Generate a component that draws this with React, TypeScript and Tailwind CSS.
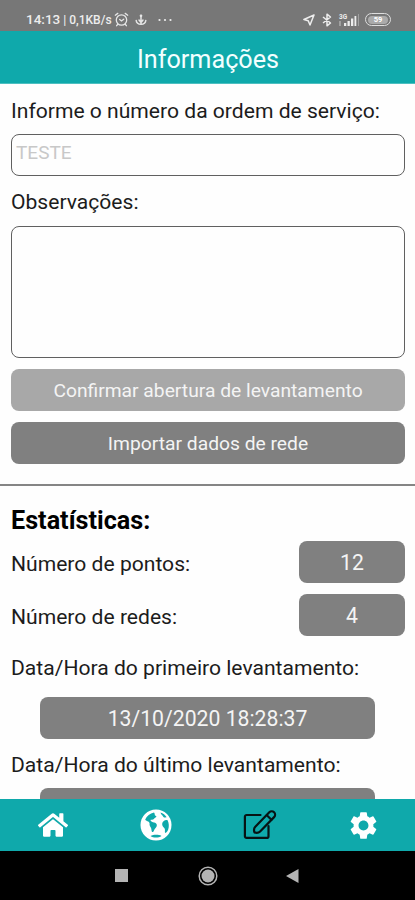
import type { ReactNode } from "react";
import { FaHome } from "react-icons/fa";
import { MdSettings } from "react-icons/md";

function Label({ children }: { children: ReactNode }) {
  return <div className="h-7 whitespace-nowrap text-[21.1px] leading-7">{children}</div>;
}

function Value({ children }: { children?: ReactNode }) {
  return (
    <div className="flex h-[42px] w-full items-center justify-center rounded-lg bg-[#808080] pt-[2px] text-[21.2px] text-[#f4f4f4]">
      {children}
    </div>
  );
}

function AlarmIcon() {
  return (
    <svg width="15" height="15" viewBox="0 0 15 15" fill="none" stroke="#e6e6e6" strokeWidth="1.3" strokeLinecap="round">
      <path d="M1.3 3.2 3.8 1.4M13.7 3.2 11.2 1.4M3.6 12.5l-1 1.2M11.4 12.5l1 1.2" />
      <circle cx="7.5" cy="8" r="5.2" />
      <path d="M5.7 7.5 7.5 9l2.2-1.8" />
    </svg>
  );
}

function AnchorIcon() {
  return (
    <svg width="12" height="12" viewBox="0 0 12 12" fill="none" stroke="#e6e6e6" strokeWidth="1.5" strokeLinecap="round">
      <path d="M6 1.5V10M4 6l2 2.5L8 6M1.2 6.5C1.500 9.300 3.500 10.300 6 10.300s4.500-1 4.800-3.800" />
      <circle cx="6" cy="1.8" r=".6" />
    </svg>
  );
}

function GlobeIcon() {
  return (
    <svg width="32" height="32" viewBox="0 0 32 32">
      <circle cx="16" cy="16" r="15.5" fill="#fff" />
      <g fill="#0fa9ab">
        <path d="M14 3.600C10 4.500 6.800 7 5.200 10.600c.6 1 1.400 1.300 2.300 1.700 1 .4 2 .9 2.100 2.300-.3 1.500.3 2.800 1.200 3.900.8 1.200.500 3 1.200 4.600 1.300.2 1.800-1 2.200-2.100.4-1.100 1.500-1.800 2.100-2.900.7-1.200.8-2.600-.2-3.600-1.100-1-2.900-1-4.200-1.700-1-.6-1.700-1.300-1.200-2 1-.3 2 .2 2.900-.500.8-.8 1.500-1.600 2.600-2.300.6-.8-.4-1.300-1.200-1.500-.4-1-.1-1.900-1-2.900Z" />
        <path d="M20.500 3.600c2.600.9 4.800 2.500 6.200 4.700-1.100-.3-1.700.6-2.600.2-1.100-.6-1-1.500-2-2.300-.9-.7-1.300-1.600-1.600-2.600Z" />
        <path d="M23.500 12.200c1.200-1 2.700-1.400 4.100-1 1.400 2.800 1.600 6.200.6 9.200-.6 1.600-1.700 3-2.900 3.700-.9-1.300 0-2.900-.500-4.200-.5-1.200-1.600-1.700-2.200-2.900-.7-1.500-.6-3.600.9-4.800Z" />
        <path d="M10.500 27c3-1.500 8-1.500 11-.1-3 2.200-8 2.200-11 .1Z" />
      </g>
    </svg>
  );
}

function EditIcon() {
  return (
    <svg width="34" height="32" viewBox="0 0 34 32" fill="none" stroke="#071314" strokeWidth="2.2" strokeLinejoin="round" strokeLinecap="round">
      <path d="M17.500 6H3.600A1.700 1.700 0 0 0 1.900 7.700v19.500a1.700 1.700 0 0 0 1.700 1.700h20.200a1.700 1.700 0 0 0 1.700-1.700V17" />
      <path d="M11.500 23.400c-.7-1.900-.5-4.300.8-5.600L26.300 3.300a3.400 3.400 0 0 1 4.800 0 3.400 3.400 0 0 1 0 4.800L17.100 22.400c-1.300 1.300-3.700 1.600-5.600 1Z" />
      <path d="m23.800 6.200 4.600 4.600" />
    </svg>
  );
}

export default function App() {
  return (
    <div className="flex h-[900px] w-[415px] flex-col overflow-hidden bg-[#fefefe] font-['Roboto',sans-serif] text-[#1c1c1c]">
      <div className="flex h-[31px] shrink-0 items-center bg-[#777777] pr-[24px] pl-[26px] pt-2 text-[#ededed]">
        <span className="w-[88px] whitespace-nowrap text-[13.5px] font-medium">
          14:13<span className="text-[12px]"> | 0,1KB/s</span>
        </span>
        <AlarmIcon />
        <span className="ml-[6px]"><AnchorIcon /></span>
        <svg className="ml-[11px]" width="14" height="4" viewBox="0 0 14 4" fill="currentColor">
          <circle cx="1.500" cy="2" r="1.100" /><circle cx="7" cy="2" r="1.100" /><circle cx="12.500" cy="2" r="1.100" />
        </svg>
        <svg className="ml-auto" width="12" height="12" viewBox="0 0 12 12" fill="none" stroke="currentColor" strokeWidth="1.5" strokeLinejoin="round">
          <path d="M11 1 .9 5.500l4.300 1.200L7 11Z" />
        </svg>
        <svg className="ml-[7px]" width="10" height="14" viewBox="0 0 10 14" fill="none" stroke="currentColor" strokeWidth="1.5" strokeLinejoin="round">
          <path d="m1 4 7.500 6L5 12.800V1.200L8.500 4 1 10" />
        </svg>
        <svg className="ml-[6px]" width="22" height="14" viewBox="0 0 22 14" fill="currentColor">
          <text x="1" y="5.500" fontSize="6.500" fontWeight="700" fontFamily="Roboto">3G</text>
          <path d="M6 10h2.300v3H6zM9.500 8h2.300v5H9.500zM13 5.500h2.300V13H13zM16.500 3h1.800v10h-1.800z" />
          <path d="M20 1h1v12h-1zM1 8h2v5H1z" opacity=".35" />
        </svg>
        <span className="ml-[5px] flex h-[13px] w-[26px] items-center justify-center rounded-full border-[1.5px] border-[#dedede]">
          <span className="flex h-[8px] w-[20px] items-center justify-center rounded-full bg-[#aaaaaa] text-[7.5px] leading-none font-bold text-white">59</span>
        </span>
      </div>
      <div className="flex h-[53px] shrink-0 items-center justify-center border-b border-[#4dbfc0] bg-[#0fa9ab] pt-[5px] pl-[1px] text-[25.2px] text-[#f2ffff]">
        Informações
      </div>
      <div className="flex h-[715px] shrink-0 flex-col overflow-hidden">
        <div className="flex shrink-0 flex-col pr-[10px] pl-[11px] pt-[13px]">
          <Label>Informe o número da ordem de serviço:</Label>
          <div className="mt-[9px] h-[42px] rounded-lg border-[1.3px] border-[#606060] px-[4px] pt-[4px] text-[19px] leading-7 text-[#c8c8c8]">TESTE</div>
          <div className="mt-[12px]"><Label>Observações:</Label></div>
          <div className="mt-[10px] h-[132px] rounded-lg border-[1.3px] border-[#606060]" />
          <div className="mt-[11px] flex h-[42px] items-center justify-center rounded-lg bg-[#a8a8a8] pt-[3px] text-[19.25px] text-[#f4f4f4]">Confirmar abertura de levantamento</div>
          <div className="mt-[11px] flex h-[42px] items-center justify-center rounded-lg bg-[#808080] pt-[3px] text-[19.25px] text-[#f4f4f4]">Importar dados de rede</div>
        </div>
        <div className="mt-[20px] h-[2px] shrink-0 bg-[#858585]" />
        <div className="flex shrink-0 flex-col pr-[10px] pl-[11px] pt-[19px]">
          <div className="h-8 text-[25.2px] leading-8 font-bold text-black">Estatísticas:</div>
          <div className="mt-[4px] flex items-center justify-between">
            <div className="pt-[3px]"><Label>Número de pontos:</Label></div>
            <div className="w-[106px]"><Value>12</Value></div>
          </div>
          <div className="mt-[11px] flex items-center justify-between">
            <div className="pt-[3px]"><Label>Número de redes:</Label></div>
            <div className="w-[106px]"><Value>4</Value></div>
          </div>
          <div className="mt-[18px]"><Label>Data/Hora do primeiro levantamento:</Label></div>
          <div className="mt-[15px] pr-[30px] pl-[29px]"><Value>13/10/2020 18:28:37</Value></div>
          <div className="mt-[12px]"><Label>Data/Hora do último levantamento:</Label></div>
          <div className="mt-[9px] pr-[30px] pl-[29px]"><Value /></div>
        </div>
      </div>
      <div className="flex h-[52px] shrink-0 bg-[#0fa9ab] pl-[1px] text-white">
        <div className="flex flex-1 items-center justify-center"><FaHome size={30} /></div>
        <div className="flex flex-1 items-center justify-center"><GlobeIcon /></div>
        <div className="flex flex-1 items-center justify-center"><EditIcon /></div>
        <div className="flex flex-1 items-center justify-center"><MdSettings size={33} /></div>
      </div>
      <div className="flex h-[49px] shrink-0 items-center bg-black pl-[115px]">
        <div className="size-[13px] bg-[#b4b4b4]" />
        <svg className="ml-[70px]" width="20" height="20" viewBox="0 0 20 20">
          <circle cx="10" cy="10" r="8.800" fill="none" stroke="#b4b4b4" strokeWidth="1.5" />
          <circle cx="10" cy="10" r="6.500" fill="#b4b4b4" />
        </svg>
        <svg className="ml-[68px]" width="13" height="14" viewBox="0 0 13 14"><path d="M12.500 0v14L0 7Z" fill="#b4b4b4" /></svg>
      </div>
    </div>
  );
}
